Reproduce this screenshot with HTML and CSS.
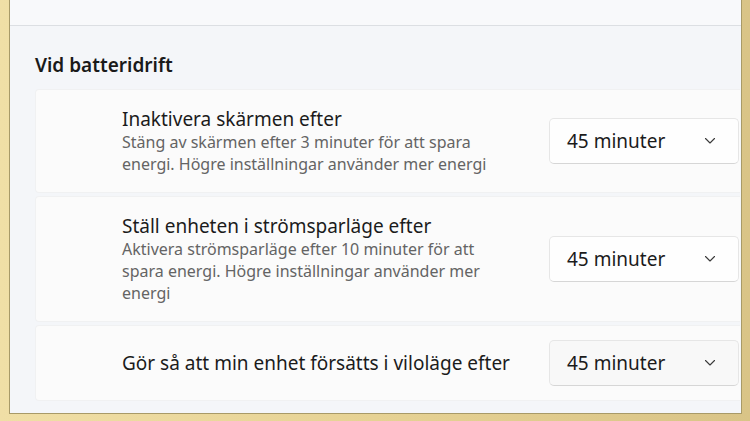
FILE: index.html
```html
<!DOCTYPE html>
<html lang="sv">
<head>
    <meta charset="UTF-8">
    <meta name="viewport" content="width=device-width, initial-scale=1.0">
    <title>Energi och batteri</title>
    <link rel="stylesheet" href="styles.css">
</head>
<body>
    <div class="frame">
        <div class="window">
            <div class="topbar"></div>

            <section class="section">
                <h2 class="section-title">Vid batteridrift</h2>

                <div class="cards">
                    <div class="card">
                        <div class="card-text">
                            <div class="card-title">Inaktivera skärmen efter</div>
                            <div class="card-desc">Stäng av skärmen efter 3 minuter för att spara<br>energi. Högre inställningar använder mer energi</div>
                        </div>
                        <button class="dropdown">
                            <span>45 minuter</span>
                            <svg class="chevron" width="12" height="8" viewBox="0 0 12 8"><polyline points="1.5,1.5 6,6 10.5,1.5" fill="none" stroke="#3a3a3a" stroke-width="1.1" stroke-linecap="round" stroke-linejoin="round"/></svg>
                        </button>
                    </div>

                    <div class="card">
                        <div class="card-text">
                            <div class="card-title">Ställ enheten i strömsparläge efter</div>
                            <div class="card-desc">Aktivera strömsparläge efter 10 minuter för att<br>spara energi. Högre inställningar använder mer<br>energi</div>
                        </div>
                        <button class="dropdown">
                            <span>45 minuter</span>
                            <svg class="chevron" width="12" height="8" viewBox="0 0 12 8"><polyline points="1.5,1.5 6,6 10.5,1.5" fill="none" stroke="#3a3a3a" stroke-width="1.1" stroke-linecap="round" stroke-linejoin="round"/></svg>
                        </button>
                    </div>

                    <div class="card card-compact">
                        <div class="card-text">
                            <div class="card-title">Gör så att min enhet försätts i viloläge efter</div>
                        </div>
                        <button class="dropdown dropdown-flat">
                            <span>45 minuter</span>
                            <svg class="chevron" width="12" height="8" viewBox="0 0 12 8"><polyline points="1.5,1.5 6,6 10.5,1.5" fill="none" stroke="#3a3a3a" stroke-width="1.1" stroke-linecap="round" stroke-linejoin="round"/></svg>
                        </button>
                    </div>
                </div>
            </section>
        </div>
    </div>
</body>
</html>
```

FILE: styles.css
```css
body {
    margin: 0;
    font-family: "Segoe UI", "Noto Sans", sans-serif;
    color: #1b1b1b;
    background: #e6d397;
}

.frame {
    height: 421px;
    box-sizing: border-box;
    padding: 0 8px 7px 9px;
    background: linear-gradient(90deg, #f0dfa6 0%, #e6d294 50%, #d9c487 100%);
}

.window {
    height: 100%;
    box-sizing: border-box;
    background: #f4f6f9;
    border: 1px solid #a89a68;
    border-top: none;
    display: flex;
    flex-direction: column;
}

.topbar {
    height: 25px;
    flex-shrink: 0;
    background: #f8f9fb;
    border-bottom: 1px solid #dcdfe3;
}

.section {
    padding: 25px 1px 0 25px;
}

.section-title {
    margin: 0 0 10px;
    font-size: 19px;
    line-height: 28px;
    font-weight: 600;
    color: #1a1a1a;
}

.cards {
    display: flex;
    flex-direction: column;
    gap: 3px;
}

.card {
    display: flex;
    align-items: center;
    justify-content: space-between;
    box-sizing: border-box;
    padding: 17px 1px 17px 86px;
    background: #fbfbfb;
    border: 1px solid #f0f1f2;
    border-right: none;
    border-radius: 4px 0 0 4px;
}

.card-compact {
    padding-top: 14px;
    padding-bottom: 14px;
}

.card-title {
    font-size: 19px;
    line-height: 24px;
}

.card-desc {
    font-size: 16px;
    line-height: 22px;
    color: #646464;
}

.dropdown {
    width: 190px;
    height: 46px;
    display: flex;
    align-items: center;
    justify-content: space-between;
    padding: 0 22px 0 17px;
    font-family: inherit;
    font-size: 19px;
    color: #1b1b1b;
    background: #fefefe;
    border: 1px solid #e6e6e6;
    border-bottom-color: #d6d6d6;
    border-radius: 5px;
}

.dropdown-flat {
    background: #f8f8f8;
}

.chevron {
    display: block;
}
```
